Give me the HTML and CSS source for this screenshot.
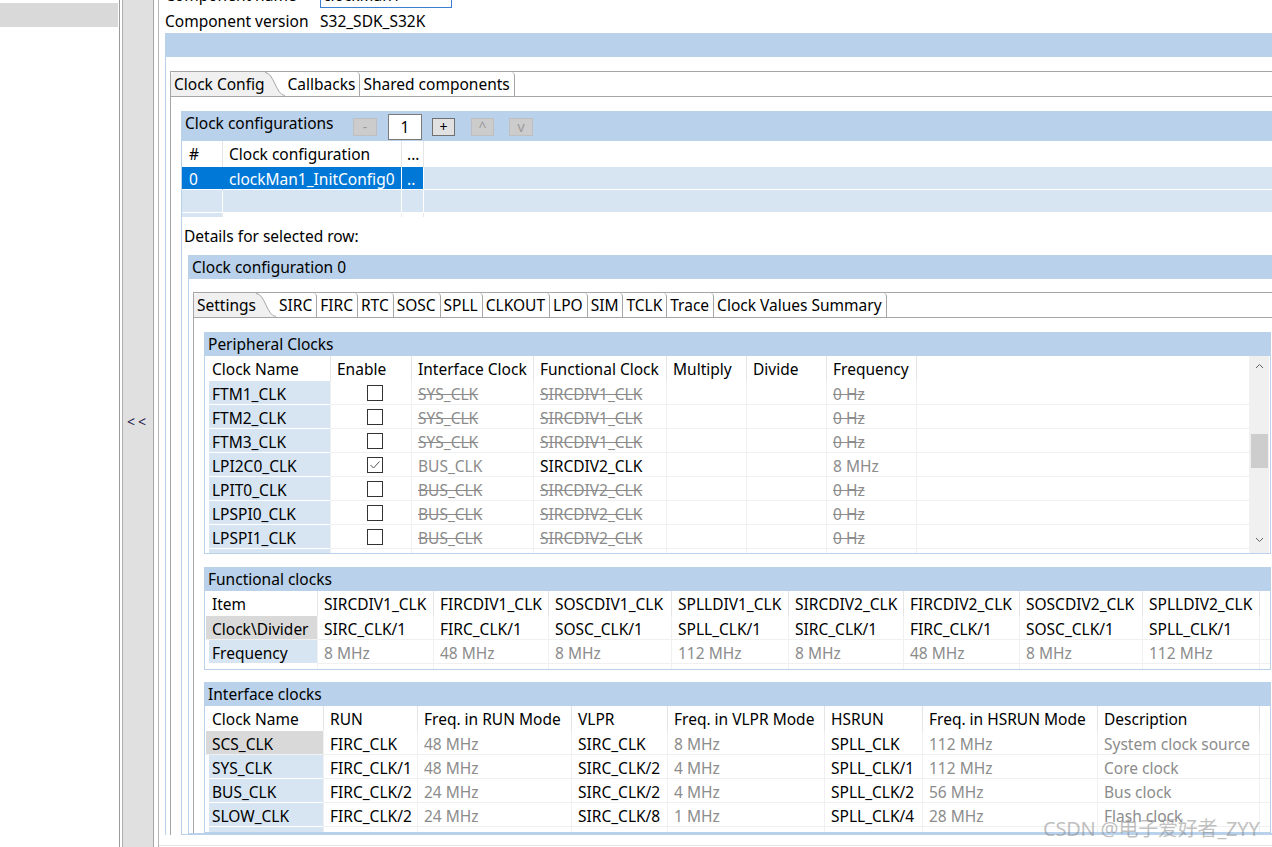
FILE: index.html
```html
<!DOCTYPE html>
<html>
<head>
<meta charset="utf-8">
<title>Clock Manager</title>
<link rel="stylesheet" href="styles.css">
</head>
<body>
<div class="app">
  <aside class="left"><div class="left-sel"></div></aside>
  <div class="sash"><span>&lt;&lt;</span></div>
  <main class="main">
    <div class="main-inner">
      <div class="prop-row name-row"><span class="prop-label">Component name</span><span class="name-input">clockMan1</span></div>
      <div class="prop-row"><span class="prop-label">Component version</span><span>S32_SDK_S32K</span></div>

      <section class="outer">
        <div class="outer-h"></div>
        <div class="outer-b">
          <div class="folder">
            <div class="tabs">
              <div class="tab sel"><span>Clock Config</span><svg class="curve" width="20" height="24" viewBox="0 0 20 24"><path d="M0 0 L0.5 0 C9 0 11 24 20 24 L0 24 Z" fill="#f0f0f0"/><path d="M0 0.5 C9 0.5 11 23.5 20 23.5" fill="none" stroke="#a6a6a6" stroke-width="1"/></svg></div>
              <div class="tab">Callbacks</div>
              <div class="tab">Shared components</div>
            </div>
            <div class="folder-body">
              <section class="box cfgs">
                <div class="cfgs-h">
                  <span class="cfgs-title">Clock configurations</span>
                  <span class="btn dis b-minus">-</span>
                  <span class="num">1</span>
                  <span class="btn b-plus">+</span>
                  <span class="btn dis b-up">^</span>
                  <span class="btn dis b-down">v</span>
                </div>
                <div class="cfg-table">
                  <div class="t h first">#</div><div class="t h">Clock configuration</div><div class="t h dots">...</div><div class="t h"></div>
                  <div class="t d sel first">0</div><div class="t d sel nb">clockMan1_InitConfig0</div><div class="t d sel dots">..</div><div class="t d"></div>
                  <div class="t d first"></div><div class="t d"></div><div class="t d"></div><div class="t d"></div>
                  <div class="t p first pb"></div><div class="t p"></div><div class="t p"></div><div class="t p"></div>
                </div>
                <div class="details">Details for selected row:</div>

                <section class="box cfg0">
                  <div class="box-h">Clock configuration 0</div>
                  <div class="cfg0-b">
                    <div class="folder">
                      <div class="tabs">
                        <div class="tab sel"><span>Settings</span><svg class="curve" width="20" height="24" viewBox="0 0 20 24"><path d="M0 0 L0.5 0 C9 0 11 24 20 24 L0 24 Z" fill="#f0f0f0"/><path d="M0 0.5 C9 0.5 11 23.5 20 23.5" fill="none" stroke="#a6a6a6" stroke-width="1"/></svg></div>
                        <div class="tab">SIRC</div>
                        <div class="tab">FIRC</div>
                        <div class="tab">RTC</div>
                        <div class="tab">SOSC</div>
                        <div class="tab">SPLL</div>
                        <div class="tab">CLKOUT</div>
                        <div class="tab">LPO</div>
                        <div class="tab">SIM</div>
                        <div class="tab">TCLK</div>
                        <div class="tab">Trace</div>
                        <div class="tab">Clock Values Summary</div>
                      </div>
                      <div class="folder-body set-body">

                        <section class="box panel">
                          <div class="box-h">Peripheral Clocks</div>
                          <div class="per-body">
                            <div class="grid per">
                              <div class="c h first">Clock Name</div><div class="c h">Enable</div><div class="c h">Interface Clock</div><div class="c h">Functional Clock</div><div class="c h">Multiply</div><div class="c h">Divide</div><div class="c h">Frequency</div><div class="c h"></div>

                              <div class="c first nm">FTM1_CLK</div><div class="c cbc"><span class="cb"></span></div><div class="c x">SYS_CLK</div><div class="c x">SIRCDIV1_CLK</div><div class="c"></div><div class="c"></div><div class="c x">0 Hz</div><div class="c"></div>
                              <div class="c first nm">FTM2_CLK</div><div class="c cbc"><span class="cb"></span></div><div class="c x">SYS_CLK</div><div class="c x">SIRCDIV1_CLK</div><div class="c"></div><div class="c"></div><div class="c x">0 Hz</div><div class="c"></div>
                              <div class="c first nm">FTM3_CLK</div><div class="c cbc"><span class="cb"></span></div><div class="c x">SYS_CLK</div><div class="c x">SIRCDIV1_CLK</div><div class="c"></div><div class="c"></div><div class="c x">0 Hz</div><div class="c"></div>
                              <div class="c first nm">LPI2C0_CLK</div><div class="c cbc"><span class="cb"><svg width="14" height="14" viewBox="0 0 14 14"><path d="M2.5 7 L5.5 10 L11.5 3.5" fill="none" stroke="#505050" stroke-width="1"/></svg></span></div><div class="c g">BUS_CLK</div><div class="c">SIRCDIV2_CLK</div><div class="c"></div><div class="c"></div><div class="c g">8 MHz</div><div class="c"></div>
                              <div class="c first nm">LPIT0_CLK</div><div class="c cbc"><span class="cb"></span></div><div class="c x">BUS_CLK</div><div class="c x">SIRCDIV2_CLK</div><div class="c"></div><div class="c"></div><div class="c x">0 Hz</div><div class="c"></div>
                              <div class="c first nm">LPSPI0_CLK</div><div class="c cbc"><span class="cb"></span></div><div class="c x">BUS_CLK</div><div class="c x">SIRCDIV2_CLK</div><div class="c"></div><div class="c"></div><div class="c x">0 Hz</div><div class="c"></div>
                              <div class="c first nm">LPSPI1_CLK</div><div class="c cbc"><span class="cb"></span></div><div class="c x">BUS_CLK</div><div class="c x">SIRCDIV2_CLK</div><div class="c"></div><div class="c"></div><div class="c x">0 Hz</div><div class="c"></div>
                              <div class="c first nm">LPSPI2_CLK</div><div class="c cbc"><span class="cb"></span></div><div class="c x">BUS_CLK</div><div class="c x">SIRCDIV2_CLK</div><div class="c"></div><div class="c"></div><div class="c x">0 Hz</div><div class="c"></div>
                            </div>
                            <div class="vscroll">
                              <div class="arr"><svg width="9" height="6" viewBox="0 0 9 6"><path d="M1 5 L4.5 1.5 L8 5" fill="none" stroke="#606060" stroke-width="1"/></svg></div>
                              <div class="thumb"></div>
                              <div class="spacer"></div>
                              <div class="arr"><svg width="9" height="6" viewBox="0 0 9 6"><path d="M1 1 L4.5 4.5 L8 1" fill="none" stroke="#606060" stroke-width="1"/></svg></div>
                            </div>
                          </div>
                        </section>

                        <section class="box panel func">
                          <div class="box-h">Functional clocks</div>
                          <div class="grid fun">
                            <div class="c h first">Item</div><div class="c h">SIRCDIV1_CLK</div><div class="c h">FIRCDIV1_CLK</div><div class="c h">SOSCDIV1_CLK</div><div class="c h">SPLLDIV1_CLK</div><div class="c h">SIRCDIV2_CLK</div><div class="c h">FIRCDIV2_CLK</div><div class="c h">SOSCDIV2_CLK</div><div class="c h">SPLLDIV2_CLK</div><div class="c h"></div>
                            <div class="c first gr">Clock\Divider</div><div class="c">SIRC_CLK/1</div><div class="c">FIRC_CLK/1</div><div class="c">SOSC_CLK/1</div><div class="c">SPLL_CLK/1</div><div class="c">SIRC_CLK/1</div><div class="c">FIRC_CLK/1</div><div class="c">SOSC_CLK/1</div><div class="c">SPLL_CLK/1</div><div class="c"></div>
                            <div class="c first nm">Frequency</div><div class="c g">8 MHz</div><div class="c g">48 MHz</div><div class="c g">8 MHz</div><div class="c g">112 MHz</div><div class="c g">8 MHz</div><div class="c g">48 MHz</div><div class="c g">8 MHz</div><div class="c g">112 MHz</div><div class="c"></div>
                            <div class="c first pp"></div><div class="c pp"></div><div class="c pp"></div><div class="c pp"></div><div class="c pp"></div><div class="c pp"></div><div class="c pp"></div><div class="c pp"></div><div class="c pp"></div><div class="c pp"></div>
                          </div>
                        </section>

                        <section class="box panel iface">
                          <div class="box-h">Interface clocks</div>
                          <div class="grid ifc">
                            <div class="c h first">Clock Name</div><div class="c h">RUN</div><div class="c h">Freq. in RUN Mode</div><div class="c h">VLPR</div><div class="c h">Freq. in VLPR Mode</div><div class="c h">HSRUN</div><div class="c h">Freq. in HSRUN Mode</div><div class="c h">Description</div><div class="c h"></div>
                            <div class="c first gr">SCS_CLK</div><div class="c">FIRC_CLK</div><div class="c g">48 MHz</div><div class="c">SIRC_CLK</div><div class="c g">8 MHz</div><div class="c">SPLL_CLK</div><div class="c g">112 MHz</div><div class="c g">System clock source</div><div class="c"></div>
                            <div class="c first nm">SYS_CLK</div><div class="c">FIRC_CLK/1</div><div class="c g">48 MHz</div><div class="c">SIRC_CLK/2</div><div class="c g">4 MHz</div><div class="c">SPLL_CLK/1</div><div class="c g">112 MHz</div><div class="c g">Core clock</div><div class="c"></div>
                            <div class="c first nm">BUS_CLK</div><div class="c">FIRC_CLK/2</div><div class="c g">24 MHz</div><div class="c">SIRC_CLK/2</div><div class="c g">4 MHz</div><div class="c">SPLL_CLK/2</div><div class="c g">56 MHz</div><div class="c g">Bus clock</div><div class="c"></div>
                            <div class="c first nm">SLOW_CLK</div><div class="c">FIRC_CLK/2</div><div class="c g">24 MHz</div><div class="c">SIRC_CLK/8</div><div class="c g">1 MHz</div><div class="c">SPLL_CLK/4</div><div class="c g">28 MHz</div><div class="c g">Flash clock</div><div class="c"></div>
                            <div class="c first pp nm"></div><div class="c pp"></div><div class="c pp"></div><div class="c pp"></div><div class="c pp"></div><div class="c pp"></div><div class="c pp"></div><div class="c pp"></div><div class="c pp"></div>
                          </div>
                        </section>

                      </div>
                    </div>
                  </div>
                </section>
              </section>
            </div>
          </div>
        </div>
      </section>
    </div>
  </main>
</div>
<div class="watermark">CSDN @电子爱好者_ZYY</div>
</body>
</html>
```

FILE: styles.css
```css
* { box-sizing: border-box; }
html, body { margin: 0; padding: 0; }
body {
  width: 1272px;
  height: 847px;
  overflow: hidden;
  background: #fff;
  font-family: "Noto Sans", "DejaVu Sans", sans-serif;
  font-size: 15.5px;
  color: #000;
  position: relative;
}

.app { display: flex; height: 847px; }

.left {
  flex: none;
  width: 120px;
  border-right: 1px solid #9a9a9a;
  padding-top: 3px;
}
.left-sel { height: 24px; background: #d9d9d9; margin-right: 1px; }

.sash {
  flex: none;
  width: 32px;
  margin-left: 2px;
  background: #e0e0e0;
  border-left: 1px solid #b0b0b0;
  border-right: 1px solid #a6a6a6;
  display: flex;
  align-items: center;
  justify-content: center;
  padding-bottom: 5px;
  font-size: 14px;
  letter-spacing: 3px;
  color: #1c1c48;
}

.main {
  flex: none;
  width: 1114px;
  margin-left: 4px;
  border-left: 1px solid #b4b4b4;
}
.main-inner {
  height: 846px;
  overflow: hidden;
  border-bottom: 1px solid #e3e3e3;
  padding-left: 6px;
}

.prop-row { display: flex; align-items: center; height: 26px; white-space: nowrap; padding-top: 1px; }
.name-row { margin-top: -19px; }
.prop-label { width: 155px; }
.name-input {
  width: 132px;
  height: 26px;
  border: 1px solid #3a7fd0;
  padding-left: 2px;
  line-height: 24px;
}

/* outer section */
.outer { width: 1300px; }
.outer-h { height: 24px; background: #b9d1ea; }
.outer-b { border-left: 1px solid #b9d1ea; padding: 14px 0 0 4px; }

/* tab folders */
.folder { border-top: 1px solid #a6a6a6; border-left: 1px solid #a6a6a6; }
.tabs {
  display: flex;
  height: 25px;
  border-bottom: 1px solid #a6a6a6;
  white-space: nowrap;
}
.tab {
  height: 24px;
  line-height: 24px;
  padding: 0 4px 0 3px;
  border-right: 1px solid #a6a6a6;
  border-top-right-radius: 4px;
}
.tab.sel {
  display: flex;
  padding: 0 0 0 3px;
  border-right: 0;
  border-top-left-radius: 4px;
  background: linear-gradient(#f0f0f0, #f0f0f0) left / calc(100% - 20px) 100% no-repeat;
}
.curve { display: block; flex: none; }
.folder-body { padding: 14px 0 0 10px; }

/* generic boxed section */
.box { border: 1px solid #b9d1ea; }
.box-h {
  height: 23px;
  line-height: 23px;
  background: #b9d1ea;
  padding-left: 3px;
  white-space: nowrap;
}

/* clock configurations */
.cfgs-h {
  display: flex;
  align-items: center;
  height: 29px;
  background: #b9d1ea;
  padding-left: 3px;
  white-space: nowrap;
}
.cfgs-title { width: 168px; line-height: 23px; align-self: flex-start; }
.btn {
  flex: none;
  height: 18px;
  width: 24px;
  line-height: 16px;
  text-align: center;
  font-size: 14px;
  border: 1px solid #adadad;
  background: #e1e1e1;
  color: #000;
}
.btn.dis { background: #cccccc; border-color: #bfbfbf; color: #9a9a9a; }
.b-minus { margin-right: 11px; }
.num {
  flex: none;
  width: 34px;
  height: 26px;
  line-height: 25px;
  border: 1px solid #7a7a7a;
  background: #fff;
  text-align: center;
  margin-right: 10px;
}
.b-plus { width: 23px; margin-right: 16px; border-color: #707070; }
.b-up { width: 23px; margin-right: 15px; }

.cfg-table {
  display: grid;
  grid-template-columns: 40px 179px 22px 1fr;
  grid-template-rows: 26px 23px 23px 4px;
}
.t { white-space: nowrap; overflow: hidden; padding-left: 6px; border-left: 1px solid #fff; }
.t.first { border-left: 0; padding-left: 7px; }
.t.h { line-height: 26px; border-left-color: #e5e5e5; background: #fff; }
.t.h.first { border-left: 0; }
.t.d { background: #d7e4f2; border-bottom: 1px solid #fff; line-height: 22px; padding-top: 1px; }
.t.d.sel { background: #0078d7; color: #fff; }
.t.d.sel.nb { border-left-color: #0078d7; }
.t.dots { padding-left: 5px; }
.t.p { background: #fff; border-left-color: #e8e8e8; }
.t.p.pb { background: #d7e4f2; }

.details { height: 38px; line-height: 38px; padding-left: 2px; }

.cfg0 { margin-left: 6px; }
.cfg0-b { padding: 13px 0 0 4px; }

/* panels */
.panel { width: 1067px; }
.func { margin-top: 13px; }
.iface { margin-top: 12px; }

.per-body { display: flex; height: 197px; }
.grid { display: grid; overflow: hidden; }
.per {
  width: 1044px;
  height: 197px;
  grid-template-columns: 125px 81px 122px 133px 80px 80px 90px 1fr;
  grid-template-rows: 25px repeat(8, 24px);
}
.fun {
  grid-template-columns: 112px 116px 115px 123px 117px 115px 116px 123px 117px 1fr;
  grid-template-rows: 25px 24px 24px 5px;
}
.ifc {
  grid-template-columns: 118px 94px 154px 96px 157px 98px 175px 162px 1fr;
  grid-template-rows: 25px repeat(4, 24px) 5px;
}

.c {
  white-space: nowrap;
  overflow: hidden;
  padding-left: 6px;
  padding-top: 1px;
  border-left: 1px solid #f0f0f0;
  border-bottom: 1px solid #f0f0f0;
  line-height: 24px;
}
.c.first { border-left: 0; padding-left: 7px; }
.c.h { line-height: 25px; border-bottom: 0; border-left-color: #e5e5e5; }
.c.h.first { border-left: 0; }
.c.pp { border-bottom: 0; }
.nm { background: #d7e4f2; box-shadow: inset 4px 0 0 #fff; border-bottom-color: #fff; }
.c.first.nm { padding-left: 7px; }
.gr { background: #d9d9d9; box-shadow: inset 1px 0 0 #fff; }
.g { color: #8c8c8c; }
.x { color: #8c8c8c; text-decoration: line-through; }

.cbc { display: flex; align-items: center; padding-left: 36px; padding-top: 0; }
.cb {
  display: block;
  width: 16px;
  height: 16px;
  border: 1px solid #333;
  background: #fff;
}
.cb svg { display: block; }

.vscroll {
  flex: none;
  width: 20px;
  margin-right: 1px;
  background: #f0f0f0;
  display: flex;
  flex-direction: column;
  align-items: center;
  padding-bottom: 3px;
}
.arr { height: 20px; display: flex; align-items: center; justify-content: center; width: 100%; }
.thumb { width: 17px; height: 34px; background: #cdcdcd; margin-top: 58px; }
.spacer { flex: 1; }

.watermark {
  position: absolute;
  left: 1043px;
  top: 813px;
  font-family: "Noto Sans", "Noto Sans CJK SC", sans-serif;
  font-size: 20px;
  color: rgba(130, 130, 130, 0.5);
  white-space: nowrap;
  letter-spacing: -0.2px;
}
```
